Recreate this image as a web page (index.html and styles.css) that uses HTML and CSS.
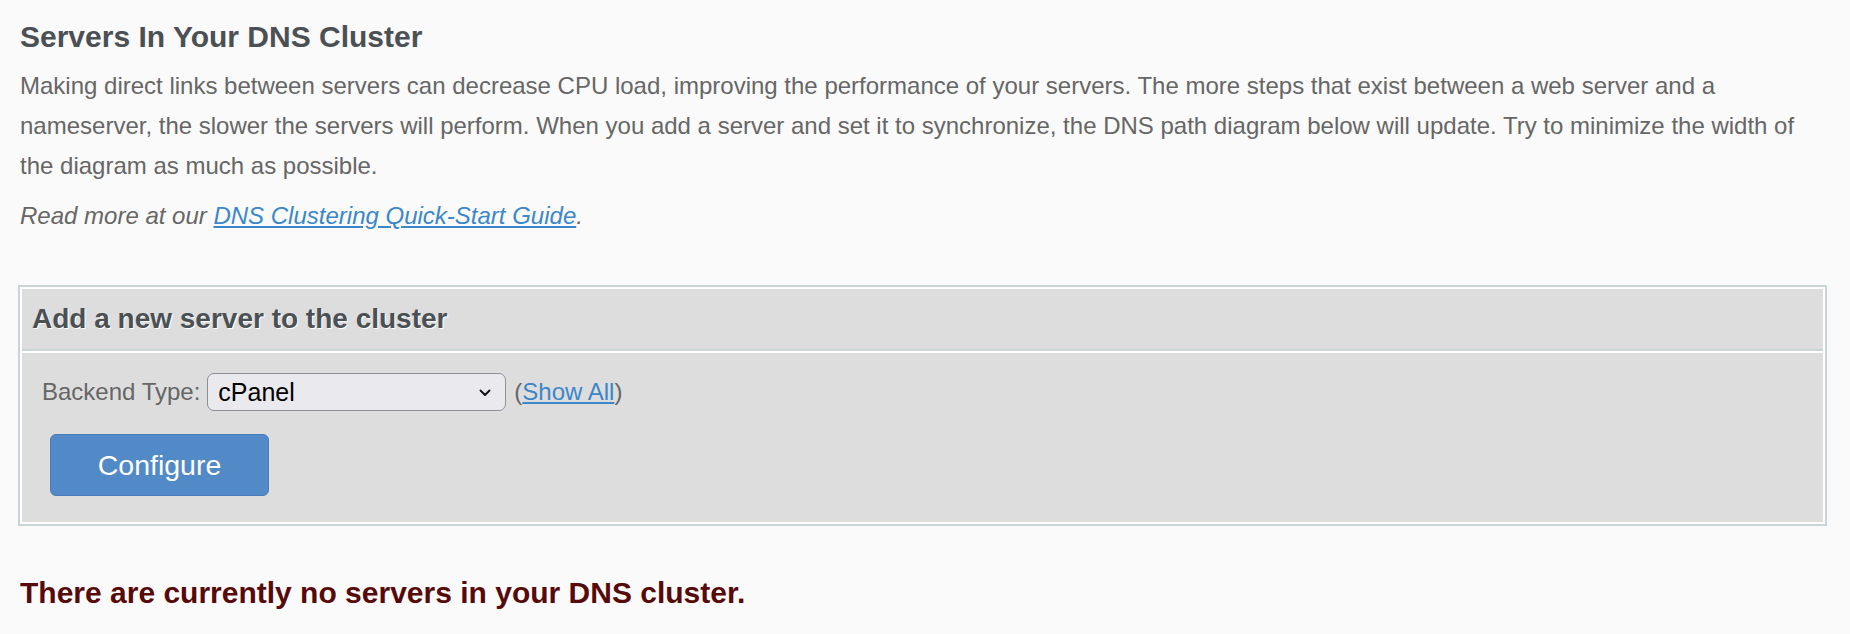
FILE: index.html
```html
<!DOCTYPE html>
<html lang="en">
<head>
<meta charset="utf-8">
<title>Servers In Your DNS Cluster</title>
<link rel="stylesheet" href="styles.css">
</head>
<body>
<div class="page">
  <h1 class="title">Servers In Your DNS Cluster</h1>
  <p class="desc">Making direct links between servers can decrease CPU load, improving the performance of your servers. The more steps that exist between a web server and a nameserver, the slower the servers will perform. When you add a server and set it to synchronize, the DNS path diagram below will update. Try to minimize the width of the diagram as much as possible.</p>
  <p class="readmore"><em>Read more at our <a href="#">DNS Clustering Quick-Start Guide</a>.</em></p>

  <section class="box">
    <div class="box-head"><h2 class="box-title">Add a new server to the cluster</h2></div>
    <div class="box-body">
      <div class="row">
        <label class="label" for="backend">Backend Type:</label>
        <span class="select-wrap">
          <select id="backend" class="select"><option>cPanel</option></select>
          <svg class="chev" width="12" height="8" viewBox="0 0 12 8" aria-hidden="true"><path d="M1.5 1.5 L6 6 L10.5 1.5" fill="none" stroke="#111" stroke-width="1.9" stroke-linecap="round" stroke-linejoin="round"/></svg>
        </span>
        <span class="showall">(<a href="#">Show All</a>)</span>
      </div>
      <button class="btn" type="button">Configure</button>
    </div>
  </section>

  <p class="empty">There are currently no servers in your DNS cluster.</p>
</div>
</body>
</html>
```

FILE: styles.css
```css
html, body {
  margin: 0;
  background: #fafafa;
  font-family: "Liberation Sans", Arial, Helvetica, sans-serif;
}

.page {
  padding: 19px 23px 0 18px;
}

.title,
.desc,
.readmore,
.empty {
  padding-left: 2px;
}

.title {
  margin: 0;
  font-size: 30px;
  line-height: 36px;
  font-weight: bold;
  color: #4a5054;
}

.desc,
.readmore {
  font-size: 24px;
  line-height: 40px;
  color: #666666;
}

.desc {
  margin: 11px 0 0;
}

.readmore {
  margin: 10px 0 0;
}

.readmore a,
.showall a {
  color: #3b87c9;
  text-decoration: underline;
}

.box {
  margin-top: 49px;
  border: 2px solid #c8d4d7;
  background: #ffffff;
  padding: 2px;
  display: flex;
  flex-direction: column;
  gap: 2px;
}

.box-head {
  height: 60px;
  background: #dddddd;
  border-bottom: 2px solid #c8d4d7;
  display: flex;
  align-items: center;
  padding-left: 10px;
}

.box-title {
  margin: 0;
  font-size: 28px;
  line-height: 34px;
  font-weight: bold;
  color: #4a5054;
  text-shadow: 1px 1px 0 #ffffff;
}

.box-body {
  background: #dddddd;
  padding: 20px 22px 26px 20px;
  display: flex;
  flex-direction: column;
  align-items: flex-start;
}

.row {
  display: flex;
  align-items: center;
  height: 38px;
}

.label {
  font-size: 24px;
  color: #666666;
  margin-right: 7px;
}

.select-wrap {
  position: relative;
  display: inline-flex;
}

.select {
  -webkit-appearance: none;
  appearance: none;
  width: 299px;
  height: 38px;
  box-sizing: border-box;
  border: 1.5px solid #8e8e95;
  border-radius: 7px;
  background: #e9e9ee;
  font-family: "Liberation Sans", Arial, Helvetica, sans-serif;
  font-size: 25px;
  color: #000000;
  padding: 0 30px 0 10px;
  margin: 0;
}

.chev {
  position: absolute;
  right: 15px;
  top: 16px;
  pointer-events: none;
}

.showall {
  margin-left: 8px;
  font-size: 24px;
  color: #666666;
}

.btn {
  margin: 23px 0 0 8px;
  width: 219px;
  height: 62px;
  box-sizing: border-box;
  background: #5289c7;
  border: 1px solid #4a7cb8;
  border-radius: 6px;
  color: #ffffff;
  font-family: "Liberation Sans", Arial, Helvetica, sans-serif;
  font-size: 28.5px;
  padding: 0;
}

.empty {
  margin: 49px 0 0;
  font-size: 30px;
  line-height: 36px;
  font-weight: bold;
  color: #560a0a;
}
```
